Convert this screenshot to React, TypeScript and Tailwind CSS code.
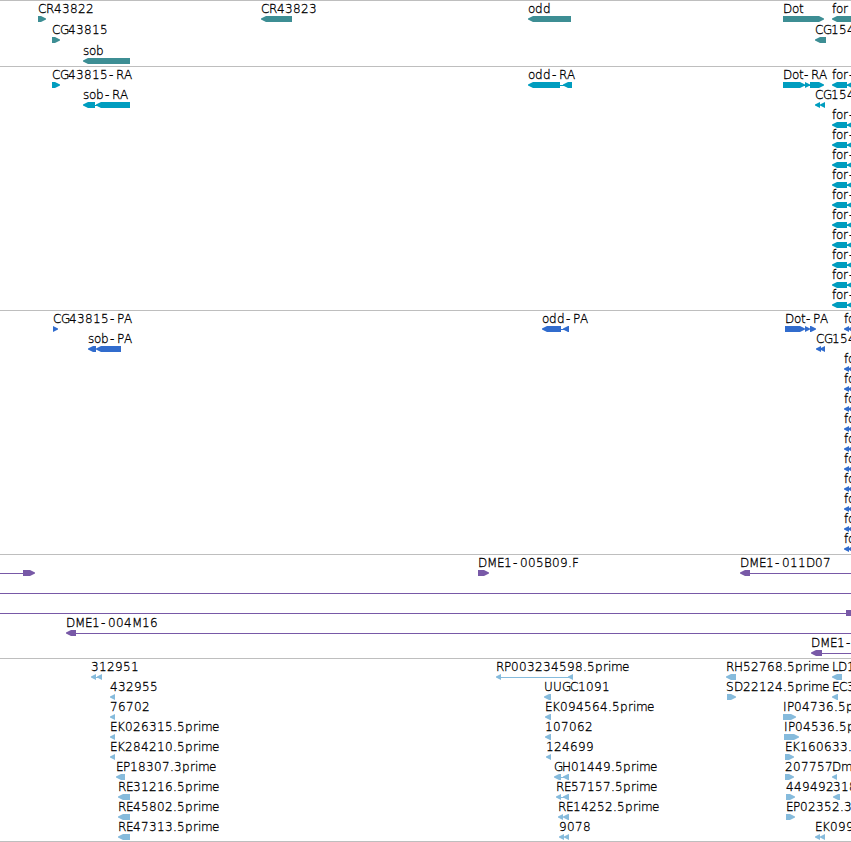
import clsx from "clsx";

type Dir = "l" | "r" | "n";
// start, end, direction
type Segment = [number, number, Dir];

interface Feature {
  label?: string;
  x: number;
  segments?: Segment[];
  // connector line: start, end
  line?: [number, number];
}

interface TrackProps {
  name: string;
  color: string;
  className: string;
  rowClassName?: string;
  rows: Feature[][];
}

const END = 861;

const genes: Feature[][] = [
  [
    { label: "CR43822", x: 38, segments: [[38, 46, "r"]] },
    { label: "CR43823", x: 261, segments: [[261, 292, "l"]] },
    { label: "odd", x: 528, segments: [[528, 571, "l"]] },
    { label: "Dot", x: 783, segments: [[783, 824, "r"]] },
    { label: "for", x: 832, segments: [[832, END, "l"]] },
  ],
  [
    { label: "CG43815", x: 52, segments: [[52, 60, "r"]] },
    { label: "CG154", x: 815, segments: [[815, 826, "l"]] },
  ],
  [{ label: "sob", x: 83, segments: [[83, 130, "l"]] }],
];

const forTranscript: Feature = {
  label: "for-",
  x: 832,
  segments: [[832, 847, "l"], [847, END, "l"]],
  line: [846, 850],
};

const transcripts: Feature[][] = [
  [
    { label: "CG43815-RA", x: 52, segments: [[52, 60, "r"]] },
    { label: "odd-RA", x: 528, segments: [[528, 560, "l"], [563, 572, "l"]], line: [560, 564] },
    { label: "Dot-RA", x: 783, segments: [[783, 805, "r"], [805, 810, "r"], [810, 824, "r"]], line: [804, 811] },
    forTranscript,
  ],
  [
    { label: "sob-RA", x: 83, segments: [[83, 95, "l"], [96, 130, "l"]], line: [95, 97] },
    { label: "CG154", x: 815, segments: [[815, 820, "l"], [820, 825, "l"]] },
  ],
  ...Array.from({ length: 10 }, () => [forTranscript]),
];

const forProtein: Feature = {
  label: "fo",
  x: 844,
  segments: [[844, 849, "l"], [848, END, "l"]],
  line: [848, 851],
};

const proteins: Feature[][] = [
  [
    { label: "CG43815-PA", x: 53, segments: [[53, 58, "r"]] },
    { label: "odd-PA", x: 542, segments: [[542, 561, "l"], [563, 569, "l"]], line: [561, 565] },
    { label: "Dot-PA", x: 785, segments: [[785, 805, "r"], [805, 810, "r"], [810, 816, "r"]] },
    forProtein,
  ],
  [
    { label: "sob-PA", x: 88, segments: [[88, 96, "l"], [96, 121, "l"]] },
    { label: "CG154", x: 816, segments: [[816, 821, "l"], [820, 825, "l"]] },
  ],
  ...Array.from({ length: 10 }, () => [forProtein]),
];

const clones: Feature[][] = [
  [
    { x: 0, segments: [[23, 35, "r"]], line: [0, 24] },
    { label: "DME1-005B09.F", x: 478, segments: [[478, 489, "r"]] },
    { label: "DME1-011D07", x: 740, segments: [[740, 750, "l"]], line: [750, END] },
  ],
  [{ x: 0, line: [0, END] }],
  [{ x: 0, segments: [[846, END, "n"]], line: [0, END] }],
  [{ label: "DME1-004M16", x: 66, segments: [[66, 76, "l"]], line: [76, END] }],
  [{ label: "DME1-", x: 811, segments: [[811, 822, "l"]], line: [822, END] }],
];

const ests: Feature[][] = [
  [
    { label: "312951", x: 91, segments: [[91, 96, "l"], [97, 102, "l"]], line: [95, 98] },
    { label: "RP003234598.5prime", x: 496, segments: [[496, 501, "l"], [568, 573, "l"]], line: [501, 569] },
    { label: "RH52768.5prime", x: 726, segments: [[726, 736, "l"]] },
    { label: "LD1", x: 832, segments: [[832, 842, "l"]] },
  ],
  [
    { label: "432955", x: 110, segments: [[110, 115, "l"]] },
    { label: "UUGC1091", x: 544, segments: [[544, 551, "l"]] },
    { label: "SD22124.5prime", x: 726, segments: [[727, 736, "r"]] },
    { label: "EC3", x: 832, segments: [[832, 838, "l"]] },
  ],
  [
    { label: "76702", x: 110, segments: [[110, 115, "l"]] },
    { label: "EK094564.5prime", x: 545, segments: [[545, 551, "l"]] },
    { label: "IP04736.5p", x: 783, segments: [[783, 796, "r"]] },
  ],
  [
    { label: "EK026315.5prime", x: 110, segments: [[110, 115, "l"]] },
    { label: "107062", x: 545, segments: [[545, 551, "l"]] },
    { label: "IP04536.5p", x: 784, segments: [[784, 799, "r"]] },
  ],
  [
    { label: "EK284210.5prime", x: 110, segments: [[110, 115, "l"]] },
    { label: "124699", x: 546, segments: [[546, 551, "l"]] },
    { label: "EK160633.", x: 785, segments: [[785, 794, "r"]] },
  ],
  [
    { label: "EP18307.3prime", x: 116, segments: [[116, 125, "l"]] },
    { label: "GH01449.5prime", x: 554, segments: [[554, 561, "l"], [563, 569, "l"]], line: [560, 565] },
    { label: "207757", x: 785, segments: [[785, 794, "r"]] },
    { label: "Dm", x: 832, segments: [[832, 837, "l"]] },
  ],
  [
    { label: "RE31216.5prime", x: 118, segments: [[118, 130, "l"]] },
    { label: "RE57157.5prime", x: 556, segments: [[556, 561, "l"], [563, 569, "l"]], line: [560, 565] },
    { label: "449492", x: 786, segments: [[786, 795, "r"]] },
    { label: "318", x: 833, segments: [[833, 840, "l"]] },
  ],
  [
    { label: "RE45802.5prime", x: 118, segments: [[118, 130, "l"]] },
    { label: "RE14252.5prime", x: 558, segments: [[558, 563, "l"], [563, 569, "l"]] },
    { label: "EP02352.3", x: 786, segments: [[786, 795, "r"]] },
  ],
  [
    { label: "RE47313.5prime", x: 118, segments: [[118, 130, "l"]] },
    { label: "9078", x: 559, segments: [[559, 564, "l"], [564, 569, "l"]] },
    { label: "EK099", x: 815, segments: [[815, 820, "l"], [820, 825, "l"]] },
  ],
];

// whole-pixel advances, anything not listed is 8
const ADVANCES: Record<string, number> = {
  ".": 4, "-": 8, A: 9, D: 9, E: 7, F: 6, H: 9, I: 4, L: 6, M: 10, P: 7, U: 9,
  e: 7, f: 4, i: 3, m: 11, o: 7, r: 5, s: 6, t: 4,
};

function glyphPositions(label: string) {
  let pos = 0;
  return label
    .split("")
    .map((ch) => {
      const at = ch === "-" ? pos + 1 : pos;
      pos += ADVANCES[ch] ?? 8;
      return at;
    })
    .join(" ");
}

function segmentPoints([start, end, dir]: Segment, origin: number) {
  const a = start - origin;
  const b = end - origin;
  if (dir === "l") return `${a},2.5 ${a + 5},0 ${b},0 ${b},6 ${a + 5},6 ${a},3.5`;
  if (dir === "r") return `${a},0 ${b - 5},0 ${b},2.5 ${b},3.5 ${b - 5},6 ${a},6`;
  return `${a},0 ${b},0 ${b},6 ${a},6`;
}

function Glyph({ feature }: { feature: Feature }) {
  const { label, segments = [], line, x } = feature;
  return (
    <svg className="absolute top-0 h-5 w-px overflow-visible fill-current" style={{ left: x }}>
      {label && (
        <text
          x={glyphPositions(label)}
          y={12}
          className="fill-black stroke-black stroke-[0.3px] text-[12px] font-extralight"
        >
          {label}
        </text>
      )}
      <g transform="translate(0 15)">
        {line && <rect x={line[0] - x} y={3} width={line[1] - line[0]} height={1} />}
        {segments.map((s) => (
          <polygon key={s[0]} points={segmentPoints(s, x)} />
        ))}
      </g>
    </svg>
  );
}

function Track({ name, color, className, rowClassName = "h-5", rows }: TrackProps) {
  return (
    <section aria-label={name} className={clsx("border-t border-[#bebebe]", color, className)}>
      {rows.map((row, i) => (
        <div key={i} className={clsx("relative", rowClassName)}>
          {row.map((f) => (
            <Glyph key={f.x} feature={f} />
          ))}
        </div>
      ))}
    </section>
  );
}

export default function App() {
  return (
    <main className="h-[842px] w-[851px] overflow-hidden bg-white font-['DejaVu_Sans',sans-serif]">
      <Track name="Genes" color="text-[#3d8e94]" className="h-[66px]" rowClassName="h-[21px]" rows={genes} />
      <Track name="Transcripts" color="text-[#009dbf]" className="h-[244px]" rows={transcripts} />
      <Track name="Proteins" color="text-[#316ccd]" className="h-[244px]" rows={proteins} />
      <Track name="Clones" color="text-[#7859a7]" className="h-[104px]" rows={clones} />
      <Track name="ESTs" color="text-[#86bbdc]" className="h-[184px] border-b" rows={ests} />
    </main>
  );
}
